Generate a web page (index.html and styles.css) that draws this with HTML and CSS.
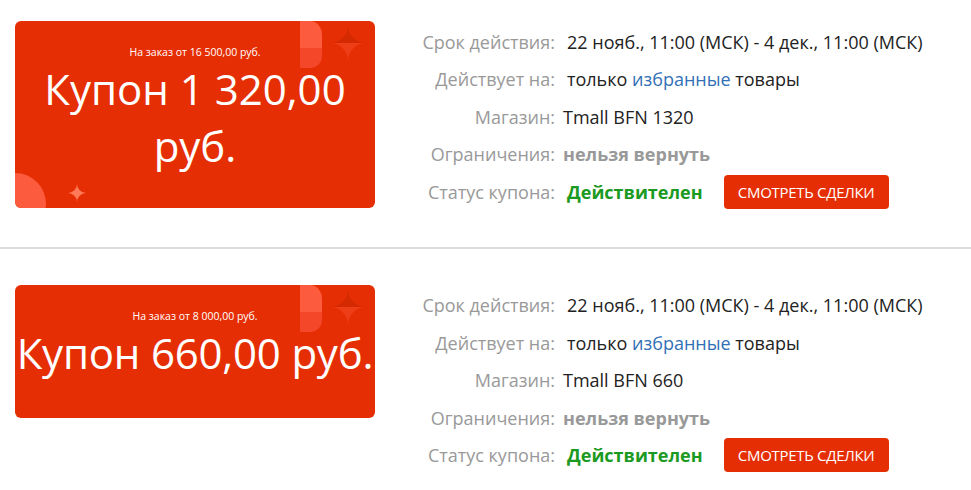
FILE: index.html
```html
<!DOCTYPE html>
<html lang="ru">
<head>
<meta charset="utf-8">
<title>Купоны</title>
<link rel="stylesheet" href="styles.css">
</head>
<body>
<div class="list">
  <section class="coupon first">
    <div class="card tall">
      <svg class="deco-tr" width="75" height="50" viewBox="0 0 75 50">
        <path d="M0 0 H10 A12 14 0 0 1 22 14 V27 H0 Z" fill="#fd5b3d"/>
        <path d="M0 27 H22 V35 A12 12 0 0 1 10 47 H0 Z" fill="#f4472a"/>
        <path d="M30 22 A18 18 0 0 0 48 4 A18 18 0 0 0 66 22 Z" fill="#d52902"/>
        <path d="M66 22 A18 18 0 0 0 48 40 A18 18 0 0 0 30 22 Z" fill="#ee3e17"/>
      </svg>
      <svg class="deco-bl" width="80" height="40" viewBox="0 0 80 40">
        <circle cx="0" cy="36" r="31" fill="#fd5b3d"/>
        <path d="M53 25 A9 9 0 0 0 62 16 A9 9 0 0 0 71 25 A9 9 0 0 0 62 34 A9 9 0 0 0 53 25 Z" fill="#ff7a58"/>
      </svg>
      <div class="min">На заказ от 16 500,00 руб.</div>
      <div class="amount">Купон 1 320,00 руб.</div>
    </div>
    <div class="info">
      <div class="label">Срок действия:</div><div class="value sp">22 нояб., 11:00 (МСК) - 4 дек., 11:00 (МСК)</div>
      <div class="label">Действует на:</div><div class="value sp">только <a class="link" href="#">избранные</a> товары</div>
      <div class="label">Магазин:</div><div class="value">Tmall BFN 1320</div>
      <div class="label">Ограничения:</div><div class="value muted">нельзя вернуть</div>
      <div class="label">Статус купона:</div><div class="value sp status"><span class="ok">Действителен</span><a class="btn" href="#">Смотреть сделки</a></div>
    </div>
  </section>
  <section class="coupon">
    <div class="card">
      <svg class="deco-tr" width="75" height="50" viewBox="0 0 75 50">
        <path d="M0 0 H10 A12 14 0 0 1 22 14 V27 H0 Z" fill="#fd5b3d"/>
        <path d="M0 27 H22 V35 A12 12 0 0 1 10 47 H0 Z" fill="#f4472a"/>
        <path d="M30 22 A18 18 0 0 0 48 4 A18 18 0 0 0 66 22 Z" fill="#d52902"/>
        <path d="M66 22 A18 18 0 0 0 48 40 A18 18 0 0 0 30 22 Z" fill="#ee3e17"/>
      </svg>
      <div class="min">На заказ от 8 000,00 руб.</div>
      <div class="amount one">Купон 660,00 руб.</div>
    </div>
    <div class="info">
      <div class="label">Срок действия:</div><div class="value sp">22 нояб., 11:00 (МСК) - 4 дек., 11:00 (МСК)</div>
      <div class="label">Действует на:</div><div class="value sp">только <a class="link" href="#">избранные</a> товары</div>
      <div class="label">Магазин:</div><div class="value">Tmall BFN 660</div>
      <div class="label">Ограничения:</div><div class="value muted">нельзя вернуть</div>
      <div class="label">Статус купона:</div><div class="value sp status"><span class="ok">Действителен</span><a class="btn" href="#">Смотреть сделки</a></div>
    </div>
  </section>
</div>
</body>
</html>
```
FILE: styles.css
```css
* { box-sizing: border-box; }
html, body { margin: 0; padding: 0; background: #fff; }
body {
  font-family: "Open Sans", "Liberation Sans", sans-serif;
  color: #222;
  overflow: hidden;
}
.list { padding-top: 21px; }
.coupon {
  display: flex;
  align-items: flex-start;
  padding: 0 0 36px 15px;
  border-bottom: 2px solid #dcdcdc;
}
.coupon + .coupon { padding-top: 36px; border-bottom: none; }
.card {
  position: relative;
  overflow: hidden;
  width: 360px;
  flex: none;
  background: #e62e04;
  border-radius: 6px;
  color: #fff;
  text-align: center;
  padding: 24px 0 37px;
}
.card.tall { height: 187px; }
.deco-tr { position: absolute; top: 0; left: 285px; }
.deco-bl { position: absolute; left: 0; bottom: 0; }
.min {
  position: relative;
  font-size: 10.5px;
  line-height: 15px;
}
.amount {
  position: relative;
  font-size: 42px;
  line-height: 57px;
}
.amount.one {
  white-space: nowrap;
  display: flex;
  justify-content: center;
  letter-spacing: -0.2px;
}
.info {
  display: grid;
  grid-template-columns: 135px auto;
  grid-auto-rows: 37.5px;
  column-gap: 8px;
  margin-left: 45px;
  margin-top: 2px;
  font-size: 18px;
}
.label {
  color: #999;
  text-align: right;
  display: flex;
  align-items: center;
  justify-content: flex-end;
  white-space: nowrap;
}
.value {
  display: flex;
  align-items: center;
  white-space: pre;
  color: #222;
}
.value.sp { padding-left: 4px; }
.link { color: #3270b6; text-decoration: none; }
.muted { color: #999; font-weight: 700; }
.status { gap: 21px; }
.ok { color: #1b9a22; font-weight: 700; }
.btn {
  display: inline-flex;
  align-items: center;
  justify-content: center;
  width: 165px;
  height: 34px;
  background: #e62e04;
  color: #fff;
  border-radius: 4px;
  font-size: 15px;
  text-transform: uppercase;
  text-decoration: none;
  letter-spacing: -0.3px;
}
```
